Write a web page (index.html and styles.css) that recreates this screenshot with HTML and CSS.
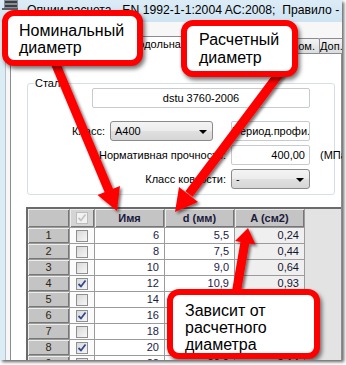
FILE: index.html
```html
<!DOCTYPE html>
<html lang="ru">

<head>
    <meta charset="UTF-8">
    <title>Опции расчета</title>
    <link rel="stylesheet" href="styles.css">
</head>

<body>
    <div class="shot">
        <!-- Window title -->
        <div class="titlebar">
            <svg class="app-icon" viewBox="0 0 20 11">
                <rect x="3" y="0" width="14" height="9" fill="#8a8f96" />
                <rect x="4" y="1" width="12" height="2" fill="#3a3f46" />
                <rect x="4" y="5" width="12" height="2" fill="#3a3f46" />
                <rect x="1" y="8" width="16" height="2" fill="#5b6068" />
            </svg>
            <span class="title">Опции расчета - EN 1992-1-1:2004 AC:2008;  Правило - ВБН</span>
        </div>

        <div class="client">
            <!-- Tabs -->
            <div class="tabs">
                <div class="tab tab-general">Общие</div>
                <div class="tab tab-section">Сечение</div>
                <div class="tab tab-long active">Продольная арм.</div>
                <div class="tab tab-trans">Поперечная</div>
                <div class="tab tab-stirrup">Хом.</div>
                <div class="tab tab-extra">Доп. параметры</div>
            </div>

            <div class="page">
                <fieldset class="group">
                    <legend>Сталь</legend>
                    <div class="field field-dstu">dstu 3760-2006</div>

                    <div class="row">
                        <div class="label label-short">Класс:</div>
                        <div class="combo combo-class">А400<span class="drop"></span></div>
                        <div class="field field-profile">Период.профи.</div>
                    </div>

                    <div class="row">
                        <div class="label label-long">Нормативная прочность:</div>
                        <div class="field field-num">400,00</div>
                        <div class="unit">(МПа)</div>
                    </div>

                    <div class="row">
                        <div class="label label-long">Класс ковкости:</div>
                        <div class="combo combo-ductility">-<span class="drop"></span></div>
                    </div>
                </fieldset>

                <!-- Bars table -->
                <div class="grid-area">
                    <div class="grid">
                        <div class="hdr"></div>
                        <div class="hdr hdr-cb"><span class="box disabled"><svg viewBox="0 0 10 10"><path d="M1.5 5 L4 7.5 L8.5 1.5" /></svg></span></div>
                        <div class="hdr">Имя</div>
                        <div class="hdr">d (мм)</div>
                        <div class="hdr">A (см2)</div>

                        <div class="rowhdr">1</div>
                        <div class="cb-cell"><span class="box"></span></div>
                        <div class="cell">6</div>
                        <div class="cell">5,5</div>
                        <div class="cell calc">0,24</div>

                        <div class="rowhdr">2</div>
                        <div class="cb-cell"><span class="box"></span></div>
                        <div class="cell">8</div>
                        <div class="cell">7,5</div>
                        <div class="cell calc">0,44</div>

                        <div class="rowhdr">3</div>
                        <div class="cb-cell"><span class="box"></span></div>
                        <div class="cell">10</div>
                        <div class="cell">9,0</div>
                        <div class="cell calc">0,64</div>

                        <div class="rowhdr">4</div>
                        <div class="cb-cell"><span class="box"><svg viewBox="0 0 10 10"><path d="M1.5 5 L4 7.5 L8.5 1.5" /></svg></span></div>
                        <div class="cell">12</div>
                        <div class="cell">10,9</div>
                        <div class="cell calc">0,93</div>

                        <div class="rowhdr">5</div>
                        <div class="cb-cell"><span class="box"></span></div>
                        <div class="cell">14</div>
                        <div class="cell">12,7</div>
                        <div class="cell calc">1,27</div>

                        <div class="rowhdr">6</div>
                        <div class="cb-cell"><span class="box"><svg viewBox="0 0 10 10"><path d="M1.5 5 L4 7.5 L8.5 1.5" /></svg></span></div>
                        <div class="cell">16</div>
                        <div class="cell">14,6</div>
                        <div class="cell calc">1,67</div>

                        <div class="rowhdr">7</div>
                        <div class="cb-cell"><span class="box"></span></div>
                        <div class="cell">18</div>
                        <div class="cell">16,4</div>
                        <div class="cell calc">2,11</div>

                        <div class="rowhdr">8</div>
                        <div class="cb-cell"><span class="box"><svg viewBox="0 0 10 10"><path d="M1.5 5 L4 7.5 L8.5 1.5" /></svg></span></div>
                        <div class="cell">20</div>
                        <div class="cell">18,3</div>
                        <div class="cell calc">2,63</div>

                        <div class="rowhdr">9</div>
                        <div class="cb-cell"><span class="box"></span></div>
                        <div class="cell">22</div>
                        <div class="cell">20,0</div>
                        <div class="cell calc">3,14</div>
                    </div>
                </div>
            </div>
        </div>

        <!-- Red arrows pointing at the columns -->
        <svg class="arrows" viewBox="0 0 342 360">
            <defs>
                <filter id="shade" x="-20%" y="-20%" width="140%" height="140%">
                    <feDropShadow dx="2" dy="2" stdDeviation="1.5" flood-color="#000" flood-opacity="0.55" />
                </filter>
            </defs>
            <g filter="url(#shade)">
                <line x1="54" y1="60" x2="109" y2="191" />
                <polygon points="117,211 120,186 97.5,195" />
            </g>
            <g filter="url(#shade)">
                <line x1="282" y1="70" x2="189" y2="194" />
                <polygon points="175,212 198,202 179,187" />
            </g>
            <g filter="url(#shade)">
                <line x1="235" y1="300" x2="245" y2="242" />
                <polygon points="248,228 255.5,244.5 235,241" />
            </g>
        </svg>

        <!-- Callouts -->
        <div class="note note-nominal">Номинальный<br>диаметр</div>
        <div class="note note-design">Расчетный<br>диаметр</div>
        <div class="note note-area">Зависит от<br>расчетного<br>диаметра</div>
    </div>
</body>

</html>
```

FILE: styles.css
```css
/* Basic Reset */
* {
    box-sizing: border-box;
    margin: 0;
    padding: 0;
}

body {
    width: 346px;
    height: 365px;
    overflow: hidden;
    background-color: #ffffff;
    font-family: 'Liberation Sans', Arial, sans-serif;
    font-size: 11px;
    color: #000;
}

/* Screenshot frame with drop shadow */
.shot {
    position: relative;
    width: 342px;
    height: 360px;
    overflow: hidden;
    background: #dcecf5;
    box-shadow: 2px 2px 3px rgba(0, 0, 0, 0.6);
}

/* Title bar */
.titlebar {
    display: flex;
    align-items: flex-start;
    height: 22px;
    background: linear-gradient(#dcecf7, #cfe3f1);
}

.app-icon {
    flex: none;
    width: 20px;
    height: 11px;
    margin: 0 6px 0 1px;
}

.title {
    flex: none;
    font-size: 12.2px;
    line-height: 18px;
    padding-top: 1px;
    white-space: pre;
}

/* Dialog client area */
.client {
    margin-left: 5px;
    height: 338px;
    padding-top: 15px;
    background: #f7f7f7;
    border-left: 1px solid #b3c2cd;
}

/* Tabs */
.tabs {
    display: flex;
    align-items: flex-end;
    height: 16px;
    padding-left: 4px;
}

.tab {
    flex: none;
    height: 15px;
    margin-right: -1px;
    border: 1px solid #898c95;
    border-bottom: none;
    border-radius: 2px 2px 0 0;
    background: linear-gradient(#f3f3f3, #dcdcdc);
    text-align: center;
    line-height: 14px;
    white-space: nowrap;
    overflow: hidden;
}

.tab.active {
    height: 18px;
    margin-bottom: -1px;
    background: #ffffff;
}

.tab-general { width: 52px; }
.tab-section { width: 57px; }
.tab-long { width: 103px; }
.tab-trans { width: 68px; }
.tab-stirrup { width: 34px; }
.tab-extra { width: 80px; }

/* Tab page */
.page {
    margin-left: 4px;
    width: 332px;
    height: 330px;
    border: 1px solid #898c95;
    background: #ffffff;
}

/* Group box "Сталь" */
.group {
    width: 308px;
    margin: 23px 0 0 16px;
    padding: 0 0 5px 0;
    border: 1px solid #d5dfe5;
    border-radius: 3px;
    min-width: 0;
}

.group legend {
    margin-left: 6px;
    padding: 0 1px;
    line-height: 12px;
}

.field {
    flex: none;
    height: 20px;
    border: 1px solid #c6cbd1;
    border-radius: 2px;
    background: #ffffff;
    line-height: 18px;
    text-align: center;
    white-space: nowrap;
    overflow: hidden;
}

.field-dstu {
    width: 218px;
    margin: -1px 0 0 64px;
}

.row {
    display: flex;
    align-items: center;
    height: 20px;
    margin-top: 4px;
}

.field-dstu + .row {
    margin-top: 13px;
}

.label {
    flex: none;
    padding-right: 5px;
    text-align: right;
    white-space: nowrap;
}

.label-short { width: 82px; }
.label-long { width: 203px; }

.combo {
    position: relative;
    flex: none;
    height: 20px;
    padding-left: 4px;
    border: 1px solid #8a8a8a;
    border-radius: 3px;
    background: linear-gradient(#f4f4f4 0%, #ececec 50%, #e0e0e0 51%, #d6d6d6 100%);
    line-height: 18px;
}

.combo-class { width: 103px; }
.combo-ductility { width: 79px; }

.drop {
    position: absolute;
    right: 5px;
    top: 8px;
    border-left: 4px solid transparent;
    border-right: 4px solid transparent;
    border-top: 4px solid #000;
}

.field-profile {
    width: 79px;
    margin-left: 18px;
}

.field-num {
    width: 79px;
    padding-right: 4px;
    text-align: right;
}

.unit {
    flex: none;
    margin-left: 10px;
    white-space: nowrap;
}

/* Bars grid */
.grid-area {
    width: 315px;
    height: 200px;
    margin: 12px 0 0 15px;
    border-top: 2px solid #6b6b6b;
    border-left: 2px solid #6b6b6b;
    background: #e3e3e3;
}

.grid {
    display: grid;
    width: max-content;
    grid-template-columns: 41px 24px 69px 69px 69px;
    grid-template-rows: 18px;
    grid-auto-rows: 15px;
    gap: 1px;
    border-right: 1px solid #9b9b9b;
    background: #9b9b9b;
}

.hdr,
.rowhdr {
    background: #c4c4c4;
    box-shadow: inset 1px 1px 0 #ededed, inset -1px -1px 0 #767676;
    text-align: center;
}

.hdr {
    font-weight: bold;
    line-height: 18px;
    color: #1a1a3c;
}

.rowhdr {
    line-height: 15px;
    color: #2e2410;
}

.hdr-cb,
.cb-cell {
    display: flex;
    align-items: center;
    justify-content: center;
}

.hdr-cb {
    background: #d4d4d4;
}

.cb-cell {
    background: #fbfbfb;
}

.cell {
    padding-right: 5px;
    background: #ffffff;
    text-align: right;
    line-height: 15px;
    color: #1c1a48;
}

.cell.calc {
    background: #efefef;
    color: #141430;
}

/* Checkboxes */
.box {
    display: flex;
    align-items: center;
    justify-content: center;
    width: 12px;
    height: 12px;
    border: 1px solid #8e8f8f;
    background: linear-gradient(135deg, #d9d9d9, #f7f7f7);
}

.box svg {
    width: 10px;
    height: 10px;
    fill: none;
    stroke: #34488f;
    stroke-width: 1.8;
}

.box.disabled {
    border-color: #bcbcbc;
    background: #f2f2f2;
}

.box.disabled svg {
    stroke: #c4c4c4;
}

/* Arrows overlay */
.arrows {
    position: absolute;
    left: 0;
    top: 0;
    width: 342px;
    height: 360px;
}

.arrows line {
    stroke: #ff0000;
    stroke-width: 9;
}

.arrows polygon {
    fill: #ff0000;
}

/* Callouts */
.note {
    position: absolute;
    border: 6px solid #ff0000;
    border-radius: 12px;
    background: #ffffff;
    box-shadow: 2px 3px 4px rgba(0, 0, 0, 0.55);
    font-size: 16px;
    line-height: 17px;
    color: #000;
    white-space: nowrap;
}

.note-nominal {
    left: 2px;
    top: 10px;
    width: 141px;
    height: 56px;
    padding: 6px 0 0 11px;
}

.note-design {
    left: 181px;
    top: 20px;
    width: 117px;
    height: 57px;
    padding: 5px 0 0 12px;
    line-height: 18px;
}

.note-area {
    left: 167px;
    top: 289px;
    width: 153px;
    height: 70px;
    padding: 7px 0 0 12px;
}
```
